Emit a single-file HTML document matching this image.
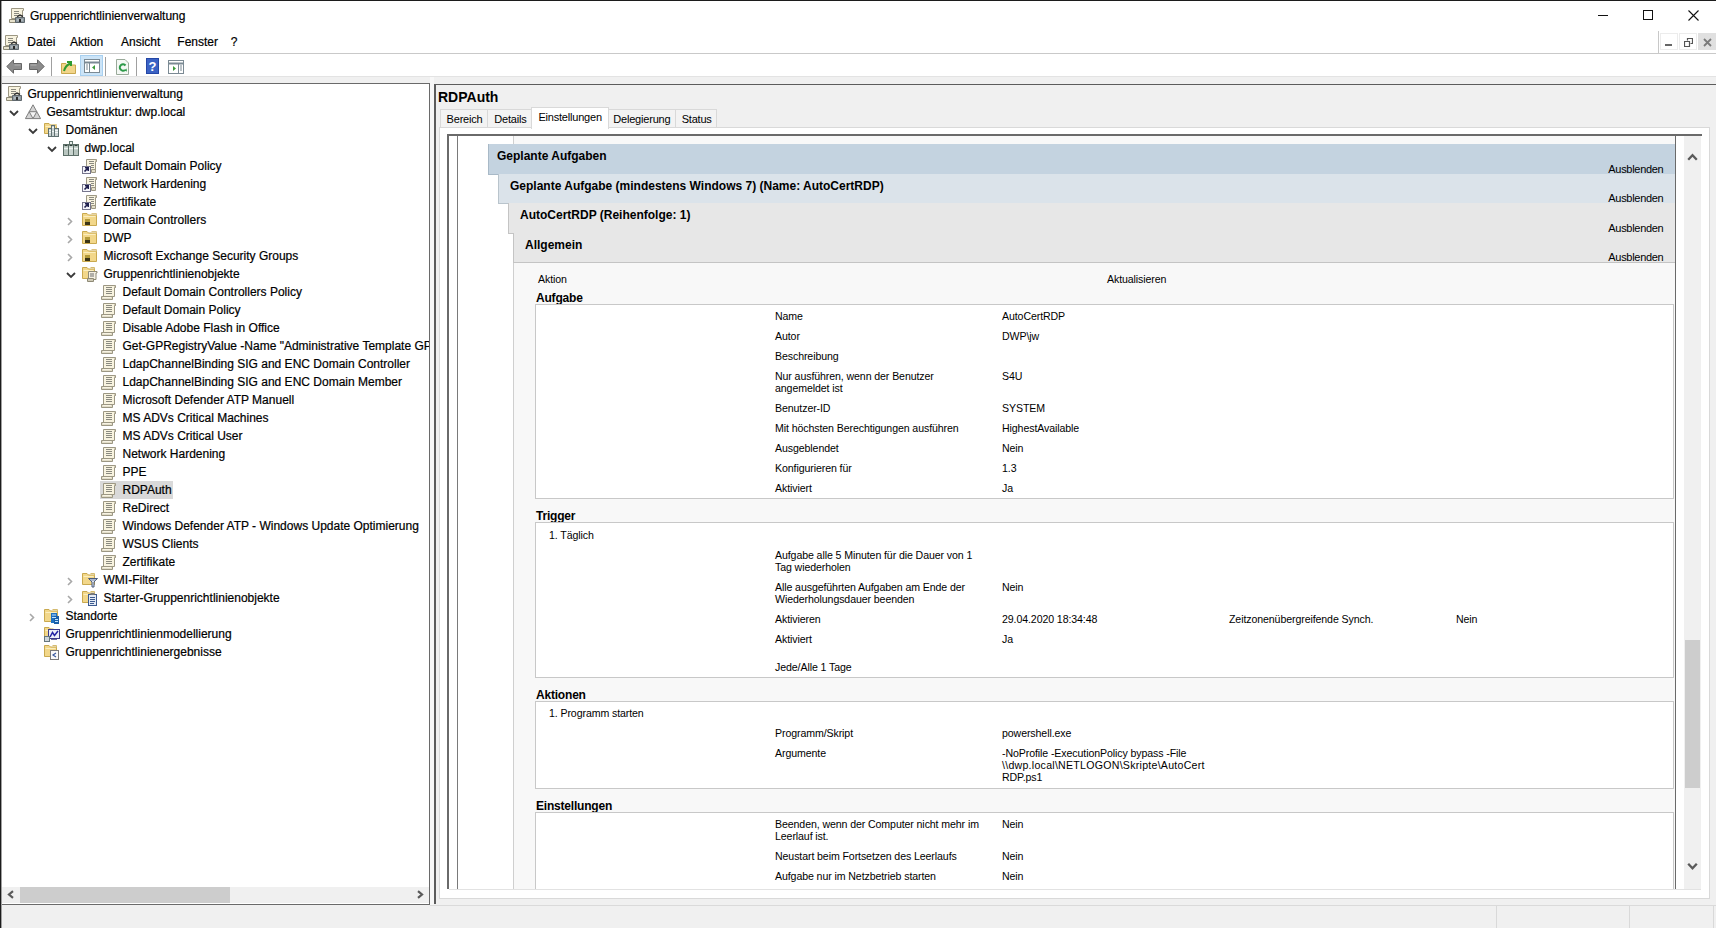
<!DOCTYPE html>
<html><head><meta charset="utf-8"><style>
html,body{margin:0;padding:0;width:1716px;height:928px;overflow:hidden;background:#fff}
body{position:relative;font-family:"Liberation Sans",sans-serif}
.a{position:absolute}
.t{position:absolute;white-space:pre}
.s{-webkit-text-stroke:0.2px currentColor}
svg{display:block}
</style></head><body>
<div class="a" style="left:0px;top:0px;width:1716px;height:1px;background:#1c1c1c"></div>
<div class="a" style="left:0px;top:0px;width:1px;height:928px;background:#1c1c1c"></div>
<div class="t s" style="left:30px;top:8.94px;font-size:12px;line-height:15px;color:#000;">Gruppenrichtlinienverwaltung</div>
<div class="a" style="left:1598px;top:15px;width:10px;height:1px;background:#111"></div>
<div class="a" style="left:1643px;top:10px;width:10px;height:10px;border:1px solid #111;box-sizing:border-box"></div>
<svg class="a" style="left:1688px;top:10px" width="11" height="11"><path d="M0.5 0.5L10.5 10.5M10.5 0.5L0.5 10.5" stroke="#111" stroke-width="1.1"/></svg>
<div class="t s" style="left:27.3px;top:35.24px;font-size:12px;line-height:15px;color:#000;">Datei</div>
<div class="t s" style="left:69.9px;top:35.24px;font-size:12px;line-height:15px;color:#000;">Aktion</div>
<div class="t s" style="left:121px;top:35.24px;font-size:12px;line-height:15px;color:#000;">Ansicht</div>
<div class="t s" style="left:177.3px;top:35.24px;font-size:12px;line-height:15px;color:#000;">Fenster</div>
<div class="t s" style="left:230.8px;top:35.24px;font-size:12px;line-height:15px;color:#000;">?</div>
<div class="a" style="left:1px;top:53px;width:1657px;height:1px;background:#c9c9c9"></div>
<div class="a" style="left:1658px;top:31px;width:1px;height:23px;background:#c8c8c8"></div>
<div class="a" style="left:1658px;top:53px;width:58px;height:1px;background:#c9c9c9"></div>
<div class="a" style="left:1665px;top:44px;width:7px;height:2px;background:#666"></div>
<svg class="a" style="left:1684px;top:38px" width="9" height="9"><path d="M3.5 2.5V0.5H8.5V5.5H6.5" fill="none" stroke="#555" stroke-width="1.2"/><path d="M0.5 3.5H5.5V8.5H0.5Z" fill="none" stroke="#555" stroke-width="1.2"/></svg>
<div class="a" style="left:1660px;top:33px;width:18px;height:17px;border:1px solid #ececec;box-sizing:border-box"></div>
<div class="a" style="left:1679px;top:33px;width:18px;height:17px;border:1px solid #ececec;box-sizing:border-box"></div>
<div class="a" style="left:1698px;top:33px;width:18px;height:17px;background:#e0e0e0"></div>
<svg class="a" style="left:1703px;top:38px" width="9" height="9"><path d="M1 1L8 8M8 1L1 8" stroke="#7a7a7a" stroke-width="1.8"/></svg>
<div class="a" style="left:1px;top:77px;width:1715px;height:6px;background:#f0f0f0"></div>
<div class="a" style="left:1px;top:76px;width:1715px;height:1px;background:#e3e3e3"></div>
<div class="a" style="left:1px;top:83px;width:429px;height:822px;background:#fff;border-top:1px solid #6a6a6a;border-right:1px solid #6a6a6a;border-bottom:1px solid #6a6a6a;box-sizing:border-box"></div>
<div class="a" style="left:430px;top:83px;width:1286px;height:822px;background:#f0f0f0"></div>
<div class="a" style="left:430px;top:77px;width:4px;height:828px;background:#f7f7f7"></div>
<div class="a" style="left:1px;top:905px;width:1715px;height:23px;background:#f0f0f0"></div>
<div class="a" style="left:1496px;top:906px;width:1px;height:22px;background:#d9d9d9"></div>
<div class="a" style="left:1629px;top:906px;width:1px;height:22px;background:#d9d9d9"></div>
<div class="a" style="left:1713px;top:906px;width:1px;height:22px;background:#d9d9d9"></div>
<svg class="a" style="left:9px;top:8px" width="16" height="16" viewBox="0 0 16 16"><path d="M2.5 0.5H14.5V2.5H13.5V10.5H2.5Z" fill="#f8f3df" stroke="#9c9783"/><path d="M5 3.5H10M5 5.5H10M5 7.5H8" stroke="#8a8a80"/><path d="M0.5 11.5H7.5V14.5H0.5Z" fill="#e6e1cc" stroke="#8e8a76"/><path d="M6.5 9.5H15.5V14.5H6.5Z" fill="#909aa0" stroke="#5e676c"/><path d="M8 8.5L11 7L14 8.5" fill="none" stroke="#333" stroke-width="1.5"/><path d="M8 12H14" stroke="#c8d0d4"/><rect x="10" y="11" width="2" height="3" fill="#2a2a2a"/></svg>
<svg class="a" style="left:3px;top:35px" width="16" height="16" viewBox="0 0 16 16"><path d="M2.5 0.5H14.5V2.5H13.5V10.5H2.5Z" fill="#f8f3df" stroke="#9c9783"/><path d="M5 3.5H10M5 5.5H10M5 7.5H8" stroke="#8a8a80"/><path d="M0.5 11.5H7.5V14.5H0.5Z" fill="#e6e1cc" stroke="#8e8a76"/><path d="M6.5 9.5H15.5V14.5H6.5Z" fill="#909aa0" stroke="#5e676c"/><path d="M8 8.5L11 7L14 8.5" fill="none" stroke="#333" stroke-width="1.5"/><path d="M8 12H14" stroke="#c8d0d4"/><rect x="10" y="11" width="2" height="3" fill="#2a2a2a"/></svg>
<svg class="a" style="left:6px;top:59px" width="16" height="16" viewBox="0 0 16 16"><path d="M0.8 7.5L7.5 0.8V4.5H15.5V10.5H7.5V14.2Z" fill="#8c8c8c" stroke="#666"/><path d="M8.5 6H14.5" stroke="#b4b4b4"/></svg>
<svg class="a" style="left:29px;top:59px" width="16" height="16" viewBox="0 0 16 16"><path d="M15.2 7.5L8.5 0.8V4.5H0.5V10.5H8.5V14.2Z" fill="#8c8c8c" stroke="#666"/><path d="M1.5 6H7.5" stroke="#b4b4b4"/></svg>
<div class="a" style="left:51px;top:57px;width:1px;height:19px;background:#a0a0a0"></div>
<svg class="a" style="left:61px;top:59px" width="16" height="16" viewBox="0 0 16 16"><path d="M0.5 4.5H5L6.5 6H14.5V14.5H0.5Z" fill="#f2d58a" stroke="#c9a84f"/><path d="M3 12C4 8 6 6 9 4.5M6 3H10V7" fill="none" stroke="#2f9a2f" stroke-width="2"/></svg>
<div class="a" style="left:80px;top:55px;width:23px;height:21px;background:#cce4f7;border:1px solid #a8d0f0;box-sizing:border-box"></div>
<svg class="a" style="left:84px;top:58px" width="16" height="16" viewBox="0 0 16 16"><rect x="0.5" y="1.5" width="15" height="13" fill="#fff" stroke="#7b8a94"/><path d="M1 4.5H15" stroke="#7b8a94" stroke-width="2"/><path d="M5.5 5V14" stroke="#7b8a94"/><path d="M2 7H4M2 9H4M2 11H4" stroke="#7b8a94"/><path d="M11 7V12L8 9.5Z" fill="#3b9a3b"/></svg>
<div class="a" style="left:105px;top:57px;width:1px;height:19px;background:#a0a0a0"></div>
<svg class="a" style="left:116px;top:59px" width="16" height="16" viewBox="0 0 16 16"><path d="M0.5 0.5H9L12.5 4V15.5H0.5Z" fill="#f4f8f4" stroke="#9aaa9a"/><path d="M9.5 6.5A3.2 3.2 0 1 0 9 11" fill="none" stroke="#2e9a4a" stroke-width="2"/><path d="M8 11.5L10.5 9.5L11 12.5Z" fill="#2e9a4a"/></svg>
<div class="a" style="left:136px;top:57px;width:1px;height:19px;background:#a0a0a0"></div>
<svg class="a" style="left:146px;top:58px" width="16" height="16" viewBox="0 0 16 16"><rect x="0" y="0" width="13" height="16" fill="#2447a6"/><rect x="1" y="1" width="11" height="14" fill="#3b62c4"/><text x="6.5" y="13" font-family="Liberation Sans" font-weight="bold" font-size="13" fill="#fff" text-anchor="middle">?</text></svg>
<svg class="a" style="left:168px;top:59px" width="16" height="16" viewBox="0 0 16 16"><rect x="0.5" y="1.5" width="15" height="13" fill="#fff" stroke="#7b8a94"/><path d="M1 4.5H15" stroke="#7b8a94" stroke-width="2"/><path d="M10.5 5V14" stroke="#7b8a94"/><path d="M12 7H14M12 9H14M12 11H14" stroke="#7b8a94"/><path d="M5 7V12L8 9.5Z" fill="#3b9a3b"/></svg>
<div class="a" style="left:1px;top:84px;width:428px;height:803px;overflow:hidden;">
<svg class="a" style="left:5px;top:2px" width="16" height="16" viewBox="0 0 16 16"><path d="M2.5 0.5H14.5V2.5H13.5V10.5H2.5Z" fill="#f8f3df" stroke="#9c9783"/><path d="M5 3.5H10M5 5.5H10M5 7.5H8" stroke="#8a8a80"/><path d="M0.5 11.5H7.5V14.5H0.5Z" fill="#e6e1cc" stroke="#8e8a76"/><path d="M6.5 9.5H15.5V14.5H6.5Z" fill="#909aa0" stroke="#5e676c"/><path d="M8 8.5L11 7L14 8.5" fill="none" stroke="#333" stroke-width="1.5"/><path d="M8 12H14" stroke="#c8d0d4"/><rect x="10" y="11" width="2" height="3" fill="#2a2a2a"/></svg>
<div class="t s" style="left:26.5px;top:2.94px;font-size:12px;line-height:15px;color:#000;">Gruppenrichtlinienverwaltung</div>
<svg class="a" style="left:8px;top:26px" width="10" height="7" viewBox="0 0 10 7"><path d="M1 1L5 5L9 1" fill="none" stroke="#3a3a3a" stroke-width="1.8"/></svg>
<svg class="a" style="left:24px;top:20px" width="16" height="16" viewBox="0 0 16 16"><path d="M8 0.8L15.6 14.6H0.4Z" fill="#d4d4d4" stroke="#7e7e7e"/><path d="M4.2 7.7H11.8L8 14.6Z" fill="#f4f4f4" stroke="#7e7e7e"/></svg>
<div class="t s" style="left:45.5px;top:20.94px;font-size:12px;line-height:15px;color:#000;">Gesamtstruktur: dwp.local</div>
<svg class="a" style="left:27px;top:44px" width="10" height="7" viewBox="0 0 10 7"><path d="M1 1L5 5L9 1" fill="none" stroke="#3a3a3a" stroke-width="1.8"/></svg>
<svg class="a" style="left:43px;top:38px" width="16" height="16" viewBox="0 0 16 16"><path d="M0.5 1.5H5L6.5 3H12.5V11.5H0.5Z" fill="#f2d78a" stroke="#c9a94f"/><path d="M1.5 4.5H11.5" stroke="#fbeebf"/><path d="M8.5 2.5H12.5V4.5" fill="none" stroke="#e4cf93"/><rect x="7.5" y="3.5" width="3" height="11" fill="#c9d2d2" stroke="#5f7070"/><rect x="4.5" y="6.5" width="3" height="8" fill="#c9d2d2" stroke="#5f7070"/><rect x="10.5" y="6.5" width="4" height="8" fill="#c9d2d2" stroke="#5f7070"/><path d="M5 8.5H7M8 5.5H10M11 8.5H14M5 10.5H7M8 9.5H10M11 10.5H14" stroke="#f2f6f6"/></svg>
<div class="t s" style="left:64.5px;top:38.94px;font-size:12px;line-height:15px;color:#000;">Domänen</div>
<svg class="a" style="left:46px;top:62px" width="10" height="7" viewBox="0 0 10 7"><path d="M1 1L5 5L9 1" fill="none" stroke="#3a3a3a" stroke-width="1.8"/></svg>
<svg class="a" style="left:62px;top:56px" width="16" height="16" viewBox="0 0 16 16"><rect x="6.5" y="1.5" width="3" height="3" fill="#e9eeec" stroke="#62776f"/><rect x="0.5" y="4.5" width="5" height="11" fill="#b9c6c0" stroke="#5c6f68"/><rect x="5.5" y="4.5" width="5" height="11" fill="#c9d4cf" stroke="#5c6f68"/><rect x="10.5" y="4.5" width="5" height="11" fill="#b9c6c0" stroke="#5c6f68"/><path d="M1.5 5.5H4.5M6.5 5.5H9.5M11.5 5.5H14.5" stroke="#2f3f3a"/><path d="M1 8.5H5M6 8.5H10M11 8.5H15" stroke="#eef3f1" stroke-width="1.4"/></svg>
<div class="t s" style="left:83.5px;top:56.94px;font-size:12px;line-height:15px;color:#000;">dwp.local</div>
<svg class="a" style="left:81px;top:74px" width="16" height="16" viewBox="0 0 16 16"><path d="M4.5 1.5H14.5V3.5H13.5V13.5H4.5Z" fill="#f8f3df" stroke="#9c9783"/><path d="M12.5 1.5C14 1.5 14.5 2 14.5 3.5" fill="#d0cbb6" stroke="#9c9783"/><path d="M7 3.5H12M7 5.5H12M9 7.5H12M9 9.5H12" stroke="#8a8a80"/><path d="M9.5 11.5H13.5V14.5H9.5Z" fill="#e2ddc8" stroke="#9c9783"/><rect x="0.5" y="8.5" width="8" height="7" fill="#f4f4fa" stroke="#76768c"/><path d="M2.5 13.5L6 10M3 9.8H6.2V13" stroke="#20204e" stroke-width="1.6" fill="none"/></svg>
<div class="t s" style="left:102.5px;top:74.94px;font-size:12px;line-height:15px;color:#000;">Default Domain Policy</div>
<svg class="a" style="left:81px;top:92px" width="16" height="16" viewBox="0 0 16 16"><path d="M4.5 1.5H14.5V3.5H13.5V13.5H4.5Z" fill="#f8f3df" stroke="#9c9783"/><path d="M12.5 1.5C14 1.5 14.5 2 14.5 3.5" fill="#d0cbb6" stroke="#9c9783"/><path d="M7 3.5H12M7 5.5H12M9 7.5H12M9 9.5H12" stroke="#8a8a80"/><path d="M9.5 11.5H13.5V14.5H9.5Z" fill="#e2ddc8" stroke="#9c9783"/><rect x="0.5" y="8.5" width="8" height="7" fill="#f4f4fa" stroke="#76768c"/><path d="M2.5 13.5L6 10M3 9.8H6.2V13" stroke="#20204e" stroke-width="1.6" fill="none"/></svg>
<div class="t s" style="left:102.5px;top:92.94px;font-size:12px;line-height:15px;color:#000;">Network Hardening</div>
<svg class="a" style="left:81px;top:110px" width="16" height="16" viewBox="0 0 16 16"><path d="M4.5 1.5H14.5V3.5H13.5V13.5H4.5Z" fill="#f8f3df" stroke="#9c9783"/><path d="M12.5 1.5C14 1.5 14.5 2 14.5 3.5" fill="#d0cbb6" stroke="#9c9783"/><path d="M7 3.5H12M7 5.5H12M9 7.5H12M9 9.5H12" stroke="#8a8a80"/><path d="M9.5 11.5H13.5V14.5H9.5Z" fill="#e2ddc8" stroke="#9c9783"/><rect x="0.5" y="8.5" width="8" height="7" fill="#f4f4fa" stroke="#76768c"/><path d="M2.5 13.5L6 10M3 9.8H6.2V13" stroke="#20204e" stroke-width="1.6" fill="none"/></svg>
<div class="t s" style="left:102.5px;top:110.94px;font-size:12px;line-height:15px;color:#000;">Zertifikate</div>
<svg class="a" style="left:66px;top:133px" width="7" height="9" viewBox="0 0 7 9"><path d="M1 1L4.5 4.5L1 8" fill="none" stroke="#a8a8a8" stroke-width="1.6"/></svg>
<svg class="a" style="left:81px;top:128px" width="16" height="16" viewBox="0 0 16 16"><path d="M0.5 1.5H5L6.5 3H14.5V13.5H0.5Z" fill="#f2d78a" stroke="#c9a94f"/><path d="M1.5 4.5H13.5" stroke="#fbeebf"/><path d="M9.5 1.5H14.5V3.5" fill="none" stroke="#dcc383"/><rect x="3" y="7" width="5" height="6" fill="#b39a3a"/><rect x="3" y="10" width="5" height="3" fill="#3a3416"/></svg>
<div class="t s" style="left:102.5px;top:128.94px;font-size:12px;line-height:15px;color:#000;">Domain Controllers</div>
<svg class="a" style="left:66px;top:151px" width="7" height="9" viewBox="0 0 7 9"><path d="M1 1L4.5 4.5L1 8" fill="none" stroke="#a8a8a8" stroke-width="1.6"/></svg>
<svg class="a" style="left:81px;top:146px" width="16" height="16" viewBox="0 0 16 16"><path d="M0.5 1.5H5L6.5 3H14.5V13.5H0.5Z" fill="#f2d78a" stroke="#c9a94f"/><path d="M1.5 4.5H13.5" stroke="#fbeebf"/><path d="M9.5 1.5H14.5V3.5" fill="none" stroke="#dcc383"/><rect x="3" y="7" width="5" height="6" fill="#b39a3a"/><rect x="3" y="10" width="5" height="3" fill="#3a3416"/></svg>
<div class="t s" style="left:102.5px;top:146.94px;font-size:12px;line-height:15px;color:#000;">DWP</div>
<svg class="a" style="left:66px;top:169px" width="7" height="9" viewBox="0 0 7 9"><path d="M1 1L4.5 4.5L1 8" fill="none" stroke="#a8a8a8" stroke-width="1.6"/></svg>
<svg class="a" style="left:81px;top:164px" width="16" height="16" viewBox="0 0 16 16"><path d="M0.5 1.5H5L6.5 3H14.5V13.5H0.5Z" fill="#f2d78a" stroke="#c9a94f"/><path d="M1.5 4.5H13.5" stroke="#fbeebf"/><path d="M9.5 1.5H14.5V3.5" fill="none" stroke="#dcc383"/><rect x="3" y="7" width="5" height="6" fill="#b39a3a"/><rect x="3" y="10" width="5" height="3" fill="#3a3416"/></svg>
<div class="t s" style="left:102.5px;top:164.94px;font-size:12px;line-height:15px;color:#000;">Microsoft Exchange Security Groups</div>
<svg class="a" style="left:65px;top:188px" width="10" height="7" viewBox="0 0 10 7"><path d="M1 1L5 5L9 1" fill="none" stroke="#3a3a3a" stroke-width="1.8"/></svg>
<svg class="a" style="left:81px;top:182px" width="16" height="16" viewBox="0 0 16 16"><path d="M0.5 1.5H5L6.5 3H12.5V12.5H0.5Z" fill="#f2d78a" stroke="#c9a94f"/><path d="M1.5 4.5H11.5" stroke="#fbeebf"/><path d="M8.5 1.5H12.5V3.5" fill="none" stroke="#d5bb6f"/><path d="M6.5 5.5H15V7H14V13.5H6.5Z" fill="#f4f0e2" stroke="#8e8a76"/><path d="M8 8H12M8 10H12" stroke="#6e6e6e"/><path d="M5.5 12.5H11.5V15.5H5.5Z" fill="#cfcab6" stroke="#8e8a76"/></svg>
<div class="t s" style="left:102.5px;top:182.94px;font-size:12px;line-height:15px;color:#000;">Gruppenrichtlinienobjekte</div>
<svg class="a" style="left:100px;top:200px" width="16" height="16" viewBox="0 0 16 16"><path d="M2.5 1.5H14.5V3.5H13.5V12.5H2.5Z" fill="#f8f3df" stroke="#9c9783"/><path d="M12.5 1.5C14 1.5 14.5 2 14.5 3.5" fill="#d0cbb6" stroke="#9c9783"/><path d="M5 3.5H11" stroke="#8a8a80"/><path d="M5 5.5H11" stroke="#8a8a80"/><path d="M5 7.5H11" stroke="#8a8a80"/><path d="M5 9.5H11" stroke="#8a8a80"/><path d="M0.5 12.5H11.5V15.5H0.5Z" fill="#e2ddc8" stroke="#9c9783"/><path d="M2 13.5H10" stroke="#f7f3e4"/></svg>
<div class="t s" style="left:121.5px;top:200.94px;font-size:12px;line-height:15px;color:#000;">Default Domain Controllers Policy</div>
<svg class="a" style="left:100px;top:218px" width="16" height="16" viewBox="0 0 16 16"><path d="M2.5 1.5H14.5V3.5H13.5V12.5H2.5Z" fill="#f8f3df" stroke="#9c9783"/><path d="M12.5 1.5C14 1.5 14.5 2 14.5 3.5" fill="#d0cbb6" stroke="#9c9783"/><path d="M5 3.5H11" stroke="#8a8a80"/><path d="M5 5.5H11" stroke="#8a8a80"/><path d="M5 7.5H11" stroke="#8a8a80"/><path d="M5 9.5H11" stroke="#8a8a80"/><path d="M0.5 12.5H11.5V15.5H0.5Z" fill="#e2ddc8" stroke="#9c9783"/><path d="M2 13.5H10" stroke="#f7f3e4"/></svg>
<div class="t s" style="left:121.5px;top:218.94px;font-size:12px;line-height:15px;color:#000;">Default Domain Policy</div>
<svg class="a" style="left:100px;top:236px" width="16" height="16" viewBox="0 0 16 16"><path d="M2.5 1.5H14.5V3.5H13.5V12.5H2.5Z" fill="#f8f3df" stroke="#9c9783"/><path d="M12.5 1.5C14 1.5 14.5 2 14.5 3.5" fill="#d0cbb6" stroke="#9c9783"/><path d="M5 3.5H11" stroke="#8a8a80"/><path d="M5 5.5H11" stroke="#8a8a80"/><path d="M5 7.5H11" stroke="#8a8a80"/><path d="M5 9.5H11" stroke="#8a8a80"/><path d="M0.5 12.5H11.5V15.5H0.5Z" fill="#e2ddc8" stroke="#9c9783"/><path d="M2 13.5H10" stroke="#f7f3e4"/></svg>
<div class="t s" style="left:121.5px;top:236.94px;font-size:12px;line-height:15px;color:#000;">Disable Adobe Flash in Office</div>
<svg class="a" style="left:100px;top:254px" width="16" height="16" viewBox="0 0 16 16"><path d="M2.5 1.5H14.5V3.5H13.5V12.5H2.5Z" fill="#f8f3df" stroke="#9c9783"/><path d="M12.5 1.5C14 1.5 14.5 2 14.5 3.5" fill="#d0cbb6" stroke="#9c9783"/><path d="M5 3.5H11" stroke="#8a8a80"/><path d="M5 5.5H11" stroke="#8a8a80"/><path d="M5 7.5H11" stroke="#8a8a80"/><path d="M5 9.5H11" stroke="#8a8a80"/><path d="M0.5 12.5H11.5V15.5H0.5Z" fill="#e2ddc8" stroke="#9c9783"/><path d="M2 13.5H10" stroke="#f7f3e4"/></svg>
<div class="t s" style="left:121.5px;top:254.94px;font-size:12px;line-height:15px;color:#000;">Get-GPRegistryValue -Name &quot;Administrative Template GPO&quot;</div>
<svg class="a" style="left:100px;top:272px" width="16" height="16" viewBox="0 0 16 16"><path d="M2.5 1.5H14.5V3.5H13.5V12.5H2.5Z" fill="#f8f3df" stroke="#9c9783"/><path d="M12.5 1.5C14 1.5 14.5 2 14.5 3.5" fill="#d0cbb6" stroke="#9c9783"/><path d="M5 3.5H11" stroke="#8a8a80"/><path d="M5 5.5H11" stroke="#8a8a80"/><path d="M5 7.5H11" stroke="#8a8a80"/><path d="M5 9.5H11" stroke="#8a8a80"/><path d="M0.5 12.5H11.5V15.5H0.5Z" fill="#e2ddc8" stroke="#9c9783"/><path d="M2 13.5H10" stroke="#f7f3e4"/></svg>
<div class="t s" style="left:121.5px;top:272.94px;font-size:12px;line-height:15px;color:#000;">LdapChannelBinding SIG and ENC Domain Controller</div>
<svg class="a" style="left:100px;top:290px" width="16" height="16" viewBox="0 0 16 16"><path d="M2.5 1.5H14.5V3.5H13.5V12.5H2.5Z" fill="#f8f3df" stroke="#9c9783"/><path d="M12.5 1.5C14 1.5 14.5 2 14.5 3.5" fill="#d0cbb6" stroke="#9c9783"/><path d="M5 3.5H11" stroke="#8a8a80"/><path d="M5 5.5H11" stroke="#8a8a80"/><path d="M5 7.5H11" stroke="#8a8a80"/><path d="M5 9.5H11" stroke="#8a8a80"/><path d="M0.5 12.5H11.5V15.5H0.5Z" fill="#e2ddc8" stroke="#9c9783"/><path d="M2 13.5H10" stroke="#f7f3e4"/></svg>
<div class="t s" style="left:121.5px;top:290.94px;font-size:12px;line-height:15px;color:#000;">LdapChannelBinding SIG and ENC Domain Member</div>
<svg class="a" style="left:100px;top:308px" width="16" height="16" viewBox="0 0 16 16"><path d="M2.5 1.5H14.5V3.5H13.5V12.5H2.5Z" fill="#f8f3df" stroke="#9c9783"/><path d="M12.5 1.5C14 1.5 14.5 2 14.5 3.5" fill="#d0cbb6" stroke="#9c9783"/><path d="M5 3.5H11" stroke="#8a8a80"/><path d="M5 5.5H11" stroke="#8a8a80"/><path d="M5 7.5H11" stroke="#8a8a80"/><path d="M5 9.5H11" stroke="#8a8a80"/><path d="M0.5 12.5H11.5V15.5H0.5Z" fill="#e2ddc8" stroke="#9c9783"/><path d="M2 13.5H10" stroke="#f7f3e4"/></svg>
<div class="t s" style="left:121.5px;top:308.94px;font-size:12px;line-height:15px;color:#000;">Microsoft Defender ATP Manuell</div>
<svg class="a" style="left:100px;top:326px" width="16" height="16" viewBox="0 0 16 16"><path d="M2.5 1.5H14.5V3.5H13.5V12.5H2.5Z" fill="#f8f3df" stroke="#9c9783"/><path d="M12.5 1.5C14 1.5 14.5 2 14.5 3.5" fill="#d0cbb6" stroke="#9c9783"/><path d="M5 3.5H11" stroke="#8a8a80"/><path d="M5 5.5H11" stroke="#8a8a80"/><path d="M5 7.5H11" stroke="#8a8a80"/><path d="M5 9.5H11" stroke="#8a8a80"/><path d="M0.5 12.5H11.5V15.5H0.5Z" fill="#e2ddc8" stroke="#9c9783"/><path d="M2 13.5H10" stroke="#f7f3e4"/></svg>
<div class="t s" style="left:121.5px;top:326.94px;font-size:12px;line-height:15px;color:#000;">MS ADVs Critical Machines</div>
<svg class="a" style="left:100px;top:344px" width="16" height="16" viewBox="0 0 16 16"><path d="M2.5 1.5H14.5V3.5H13.5V12.5H2.5Z" fill="#f8f3df" stroke="#9c9783"/><path d="M12.5 1.5C14 1.5 14.5 2 14.5 3.5" fill="#d0cbb6" stroke="#9c9783"/><path d="M5 3.5H11" stroke="#8a8a80"/><path d="M5 5.5H11" stroke="#8a8a80"/><path d="M5 7.5H11" stroke="#8a8a80"/><path d="M5 9.5H11" stroke="#8a8a80"/><path d="M0.5 12.5H11.5V15.5H0.5Z" fill="#e2ddc8" stroke="#9c9783"/><path d="M2 13.5H10" stroke="#f7f3e4"/></svg>
<div class="t s" style="left:121.5px;top:344.94px;font-size:12px;line-height:15px;color:#000;">MS ADVs Critical User</div>
<svg class="a" style="left:100px;top:362px" width="16" height="16" viewBox="0 0 16 16"><path d="M2.5 1.5H14.5V3.5H13.5V12.5H2.5Z" fill="#f8f3df" stroke="#9c9783"/><path d="M12.5 1.5C14 1.5 14.5 2 14.5 3.5" fill="#d0cbb6" stroke="#9c9783"/><path d="M5 3.5H11" stroke="#8a8a80"/><path d="M5 5.5H11" stroke="#8a8a80"/><path d="M5 7.5H11" stroke="#8a8a80"/><path d="M5 9.5H11" stroke="#8a8a80"/><path d="M0.5 12.5H11.5V15.5H0.5Z" fill="#e2ddc8" stroke="#9c9783"/><path d="M2 13.5H10" stroke="#f7f3e4"/></svg>
<div class="t s" style="left:121.5px;top:362.94px;font-size:12px;line-height:15px;color:#000;">Network Hardening</div>
<svg class="a" style="left:100px;top:380px" width="16" height="16" viewBox="0 0 16 16"><path d="M2.5 1.5H14.5V3.5H13.5V12.5H2.5Z" fill="#f8f3df" stroke="#9c9783"/><path d="M12.5 1.5C14 1.5 14.5 2 14.5 3.5" fill="#d0cbb6" stroke="#9c9783"/><path d="M5 3.5H11" stroke="#8a8a80"/><path d="M5 5.5H11" stroke="#8a8a80"/><path d="M5 7.5H11" stroke="#8a8a80"/><path d="M5 9.5H11" stroke="#8a8a80"/><path d="M0.5 12.5H11.5V15.5H0.5Z" fill="#e2ddc8" stroke="#9c9783"/><path d="M2 13.5H10" stroke="#f7f3e4"/></svg>
<div class="t s" style="left:121.5px;top:380.94px;font-size:12px;line-height:15px;color:#000;">PPE</div>
<div class="a" style="left:99px;top:397px;width:73px;height:18px;background:#d9d9d9"></div>
<svg class="a" style="left:100px;top:398px" width="16" height="16" viewBox="0 0 16 16"><path d="M2.5 1.5H14.5V3.5H13.5V12.5H2.5Z" fill="#f8f3df" stroke="#9c9783"/><path d="M12.5 1.5C14 1.5 14.5 2 14.5 3.5" fill="#d0cbb6" stroke="#9c9783"/><path d="M5 3.5H11" stroke="#8a8a80"/><path d="M5 5.5H11" stroke="#8a8a80"/><path d="M5 7.5H11" stroke="#8a8a80"/><path d="M5 9.5H11" stroke="#8a8a80"/><path d="M0.5 12.5H11.5V15.5H0.5Z" fill="#e2ddc8" stroke="#9c9783"/><path d="M2 13.5H10" stroke="#f7f3e4"/></svg>
<div class="t s" style="left:121.5px;top:398.94px;font-size:12px;line-height:15px;color:#000;">RDPAuth</div>
<svg class="a" style="left:100px;top:416px" width="16" height="16" viewBox="0 0 16 16"><path d="M2.5 1.5H14.5V3.5H13.5V12.5H2.5Z" fill="#f8f3df" stroke="#9c9783"/><path d="M12.5 1.5C14 1.5 14.5 2 14.5 3.5" fill="#d0cbb6" stroke="#9c9783"/><path d="M5 3.5H11" stroke="#8a8a80"/><path d="M5 5.5H11" stroke="#8a8a80"/><path d="M5 7.5H11" stroke="#8a8a80"/><path d="M5 9.5H11" stroke="#8a8a80"/><path d="M0.5 12.5H11.5V15.5H0.5Z" fill="#e2ddc8" stroke="#9c9783"/><path d="M2 13.5H10" stroke="#f7f3e4"/></svg>
<div class="t s" style="left:121.5px;top:416.94px;font-size:12px;line-height:15px;color:#000;">ReDirect</div>
<svg class="a" style="left:100px;top:434px" width="16" height="16" viewBox="0 0 16 16"><path d="M2.5 1.5H14.5V3.5H13.5V12.5H2.5Z" fill="#f8f3df" stroke="#9c9783"/><path d="M12.5 1.5C14 1.5 14.5 2 14.5 3.5" fill="#d0cbb6" stroke="#9c9783"/><path d="M5 3.5H11" stroke="#8a8a80"/><path d="M5 5.5H11" stroke="#8a8a80"/><path d="M5 7.5H11" stroke="#8a8a80"/><path d="M5 9.5H11" stroke="#8a8a80"/><path d="M0.5 12.5H11.5V15.5H0.5Z" fill="#e2ddc8" stroke="#9c9783"/><path d="M2 13.5H10" stroke="#f7f3e4"/></svg>
<div class="t s" style="left:121.5px;top:434.94px;font-size:12px;line-height:15px;color:#000;">Windows Defender ATP - Windows Update Optimierung</div>
<svg class="a" style="left:100px;top:452px" width="16" height="16" viewBox="0 0 16 16"><path d="M2.5 1.5H14.5V3.5H13.5V12.5H2.5Z" fill="#f8f3df" stroke="#9c9783"/><path d="M12.5 1.5C14 1.5 14.5 2 14.5 3.5" fill="#d0cbb6" stroke="#9c9783"/><path d="M5 3.5H11" stroke="#8a8a80"/><path d="M5 5.5H11" stroke="#8a8a80"/><path d="M5 7.5H11" stroke="#8a8a80"/><path d="M5 9.5H11" stroke="#8a8a80"/><path d="M0.5 12.5H11.5V15.5H0.5Z" fill="#e2ddc8" stroke="#9c9783"/><path d="M2 13.5H10" stroke="#f7f3e4"/></svg>
<div class="t s" style="left:121.5px;top:452.94px;font-size:12px;line-height:15px;color:#000;">WSUS Clients</div>
<svg class="a" style="left:100px;top:470px" width="16" height="16" viewBox="0 0 16 16"><path d="M2.5 1.5H14.5V3.5H13.5V12.5H2.5Z" fill="#f8f3df" stroke="#9c9783"/><path d="M12.5 1.5C14 1.5 14.5 2 14.5 3.5" fill="#d0cbb6" stroke="#9c9783"/><path d="M5 3.5H11" stroke="#8a8a80"/><path d="M5 5.5H11" stroke="#8a8a80"/><path d="M5 7.5H11" stroke="#8a8a80"/><path d="M5 9.5H11" stroke="#8a8a80"/><path d="M0.5 12.5H11.5V15.5H0.5Z" fill="#e2ddc8" stroke="#9c9783"/><path d="M2 13.5H10" stroke="#f7f3e4"/></svg>
<div class="t s" style="left:121.5px;top:470.94px;font-size:12px;line-height:15px;color:#000;">Zertifikate</div>
<svg class="a" style="left:66px;top:493px" width="7" height="9" viewBox="0 0 7 9"><path d="M1 1L4.5 4.5L1 8" fill="none" stroke="#a8a8a8" stroke-width="1.6"/></svg>
<svg class="a" style="left:81px;top:488px" width="16" height="16" viewBox="0 0 16 16"><path d="M0.5 1.5H5L6.5 3H12.5V12.5H0.5Z" fill="#f2d78a" stroke="#c9a94f"/><path d="M1.5 4.5H11.5" stroke="#fbeebf"/><path d="M8.5 1.5H12.5V3.5" fill="none" stroke="#d5bb6f"/><path d="M6.5 6.5H15.5L12 10V15H10V10Z" fill="#dfe5ef" stroke="#4b5b7b"/><path d="M8 8H14" stroke="#7585a6"/></svg>
<div class="t s" style="left:102.5px;top:488.94px;font-size:12px;line-height:15px;color:#000;">WMI-Filter</div>
<svg class="a" style="left:66px;top:511px" width="7" height="9" viewBox="0 0 7 9"><path d="M1 1L4.5 4.5L1 8" fill="none" stroke="#a8a8a8" stroke-width="1.6"/></svg>
<svg class="a" style="left:81px;top:506px" width="16" height="16" viewBox="0 0 16 16"><path d="M0.5 1.5H5L6.5 3H12.5V12.5H0.5Z" fill="#f2d78a" stroke="#c9a94f"/><path d="M1.5 4.5H11.5" stroke="#fbeebf"/><path d="M8.5 1.5H12.5V3.5" fill="none" stroke="#d5bb6f"/><rect x="6.5" y="4.5" width="8" height="11" fill="#e3eaf5" stroke="#3c5a8e"/><path d="M8 7.5H13M8 9.5H13M8 11.5H13M8 13.5H12" stroke="#3c5a8e"/><rect x="8.5" y="3" width="4" height="2" fill="#7a7a7a"/></svg>
<div class="t s" style="left:102.5px;top:506.94px;font-size:12px;line-height:15px;color:#000;">Starter-Gruppenrichtlinienobjekte</div>
<svg class="a" style="left:28px;top:529px" width="7" height="9" viewBox="0 0 7 9"><path d="M1 1L4.5 4.5L1 8" fill="none" stroke="#a8a8a8" stroke-width="1.6"/></svg>
<svg class="a" style="left:43px;top:524px" width="16" height="16" viewBox="0 0 16 16"><path d="M0.5 1.5H5L6.5 3H13.5V13.5H0.5Z" fill="#f2d78a" stroke="#c9a94f"/><path d="M1.5 4.5H12.5" stroke="#fbeebf"/><path d="M8.5 1.5H13.5V3.5" fill="none" stroke="#d5bb6f"/><rect x="7" y="5" width="6" height="10" fill="#1d70c2"/><rect x="10" y="8" width="5" height="8" fill="#1a5fa8"/><path d="M8 7H12M8 9.5H12M11 11.5H14M11 13.5H14" stroke="#bfe2ff"/></svg>
<div class="t s" style="left:64.5px;top:524.94px;font-size:12px;line-height:15px;color:#000;">Standorte</div>
<svg class="a" style="left:43px;top:542px" width="16" height="16" viewBox="0 0 16 16"><path d="M0.5 1.5H5L6.5 3H9.5V11.5H0.5Z" fill="#f2d78a" stroke="#c9a94f"/><path d="M1.5 4.5H8.5" stroke="#fbeebf"/><rect x="4.5" y="3.5" width="11" height="9" fill="#eceff8" stroke="#3a3a8a"/><path d="M6 11L8.5 6.5L10.5 9.5L14 5" stroke="#2424a4" stroke-width="1.5" fill="none"/><rect x="0.5" y="10.5" width="5" height="5" fill="#cdd6da" stroke="#66767c"/><path d="M7 13.5H13" stroke="#6a6a9a"/></svg>
<div class="t s" style="left:64.5px;top:542.94px;font-size:12px;line-height:15px;color:#000;">Gruppenrichtlinienmodellierung</div>
<svg class="a" style="left:43px;top:560px" width="16" height="16" viewBox="0 0 16 16"><path d="M0.5 1.5H5L6.5 3H12.5V12.5H0.5Z" fill="#f2d78a" stroke="#c9a94f"/><path d="M1.5 4.5H11.5" stroke="#fbeebf"/><path d="M8.5 1.5H12.5V3.5" fill="none" stroke="#d5bb6f"/><rect x="6.5" y="6.5" width="8" height="9" fill="#fafafa" stroke="#7a7a7a"/><path d="M12 9L9 11L12 13" stroke="#3a5aa0" fill="none" stroke-width="1.2"/></svg>
<div class="t s" style="left:64.5px;top:560.94px;font-size:12px;line-height:15px;color:#000;">Gruppenrichtlinienergebnisse</div>
</div>
<div class="a" style="left:2px;top:887px;width:427px;height:16px;background:#f0f0f0"></div>
<div class="a" style="left:20px;top:887px;width:210px;height:16px;background:#cdcdcd"></div>
<svg class="a" style="left:7px;top:890px" width="8" height="9" viewBox="0 0 8 9"><path d="M6 1.2L2 4.5L6 7.8" fill="none" stroke="#5a5a5a" stroke-width="2.2"/></svg>
<svg class="a" style="left:416px;top:890px" width="8" height="9" viewBox="0 0 8 9"><path d="M2 1.2L6 4.5L2 7.8" fill="none" stroke="#5a5a5a" stroke-width="2.2"/></svg>
<div class="a" style="left:434px;top:84px;width:1282px;height:1px;background:#5c5c5c"></div>
<div class="a" style="left:434px;top:84px;width:2px;height:820px;background:#5c5c5c"></div>
<div class="a" style="left:430px;top:905px;width:1286px;height:1px;background:#dadada"></div>
<div class="t" style="left:438px;top:88.15px;font-size:14px;line-height:18px;font-weight:bold;color:#000;">RDPAuth</div>
<div class="a" style="left:440px;top:109px;width:48px;height:19px;background:#f3f3f3;border:1px solid #d9d9d9;border-bottom:none;box-sizing:border-box"></div>
<div class="t" style="left:446.6px;top:112.19px;font-size:11px;line-height:14px;color:#000;letter-spacing:-0.2px">Bereich</div>
<div class="a" style="left:487px;top:109px;width:45px;height:19px;background:#f3f3f3;border:1px solid #d9d9d9;border-bottom:none;box-sizing:border-box"></div>
<div class="t" style="left:494.3px;top:112.19px;font-size:11px;line-height:14px;color:#000;letter-spacing:-0.2px">Details</div>
<div class="a" style="left:608px;top:109px;width:68px;height:19px;background:#f3f3f3;border:1px solid #d9d9d9;border-bottom:none;box-sizing:border-box"></div>
<div class="t" style="left:613.3px;top:112.19px;font-size:11px;line-height:14px;color:#000;letter-spacing:-0.2px">Delegierung</div>
<div class="a" style="left:675px;top:109px;width:42px;height:19px;background:#f3f3f3;border:1px solid #d9d9d9;border-bottom:none;box-sizing:border-box"></div>
<div class="t" style="left:681.7px;top:112.19px;font-size:11px;line-height:14px;color:#000;letter-spacing:-0.2px">Status</div>
<div class="a" style="left:439px;top:127px;width:1271px;height:772px;background:#fff;border:1px solid #d9d9d9;box-sizing:border-box"></div>
<div class="a" style="left:531px;top:107px;width:78px;height:22px;background:#fff;border:1px solid #d9d9d9;border-bottom:none;box-sizing:border-box"></div>
<div class="t" style="left:538.4px;top:110.19px;font-size:11px;line-height:14px;color:#000;letter-spacing:-0.2px">Einstellungen</div>
<div class="a" style="left:447px;top:134px;width:1255px;height:2px;background:#6a6a6a"></div>
<div class="a" style="left:447px;top:134px;width:2px;height:755px;background:#6a6a6a"></div>
<div class="a" style="left:449px;top:136px;width:1226px;height:753px;background:#fff"></div>
<div class="a" style="left:1675px;top:136px;width:1px;height:753px;background:#6a6a6a"></div>
<div class="a" style="left:449px;top:889px;width:1252px;height:1px;background:#e2e2e2"></div>
<div class="a" style="left:1684px;top:136px;width:17px;height:753px;background:#f0f0f0"></div>
<div class="a" style="left:1685px;top:640px;width:15px;height:148px;background:#cdcdcd"></div>
<svg class="a" style="left:1687px;top:152px" width="11" height="10" viewBox="0 0 11 10"><path d="M1.2 7.8L5.5 3.2L9.8 7.8" fill="none" stroke="#5a5a5a" stroke-width="2.3"/></svg>
<svg class="a" style="left:1687px;top:862px" width="11" height="10" viewBox="0 0 11 10"><path d="M1.2 1.8L5.5 6.4L9.8 1.8" fill="none" stroke="#5a5a5a" stroke-width="2.3"/></svg>
<div class="a" style="left:449px;top:136px;width:1226px;height:753px;overflow:hidden;">
<div class="a" style="left:8px;top:0px;width:1px;height:753px;background:#7a7a7a"></div>
<div class="a" style="left:65px;top:0px;width:1161px;height:8px;background:#f8f8f8"></div>
<div class="a" style="left:64px;top:0px;width:1px;height:10px;background:#d0d0d0"></div>
<div class="a" style="left:39px;top:8px;width:1187px;height:31px;background:#c4d3e0;border-left:1px solid #a8b9c7;border-bottom:1px solid #a8b9c7;box-sizing:border-box"></div>
<div class="t" style="left:48px;top:12.84px;font-size:12px;line-height:15px;font-weight:bold;color:#000;">Geplante Aufgaben</div>
<div class="t" style="left:1159.3px;top:25.69px;font-size:11px;line-height:14px;color:#000;letter-spacing:-0.3px">Ausblenden</div>
<div class="a" style="left:49px;top:38px;width:1177px;height:30px;background:#dbe3ea;border-left:1px solid #b9c4cc;border-bottom:1px solid #b9c4cc;box-sizing:border-box"></div>
<div class="t" style="left:61px;top:42.84px;font-size:12px;line-height:15px;font-weight:bold;color:#000;">Geplante Aufgabe (mindestens Windows 7) (Name: AutoCertRDP)</div>
<div class="t" style="left:1159.3px;top:55.19px;font-size:11px;line-height:14px;color:#000;letter-spacing:-0.3px">Ausblenden</div>
<div class="a" style="left:59px;top:67px;width:1167px;height:31px;background:#e7e7e7;border-left:1px solid #c4c4c4;border-bottom:1px solid #c4c4c4;box-sizing:border-box"></div>
<div class="t" style="left:71px;top:71.84px;font-size:12px;line-height:15px;font-weight:bold;color:#000;">AutoCertRDP (Reihenfolge: 1)</div>
<div class="t" style="left:1159.3px;top:84.69px;font-size:11px;line-height:14px;color:#000;letter-spacing:-0.3px">Ausblenden</div>
<div class="a" style="left:64px;top:97px;width:1162px;height:30px;background:#e7e7e7;border-left:1px solid #c4c4c4;border-bottom:1px solid #c4c4c4;box-sizing:border-box"></div>
<div class="t" style="left:76px;top:101.84px;font-size:12px;line-height:15px;font-weight:bold;color:#000;">Allgemein</div>
<div class="t" style="left:1159.3px;top:114.19px;font-size:11px;line-height:14px;color:#000;letter-spacing:-0.3px">Ausblenden</div>
<div class="a" style="left:64px;top:127px;width:1162px;height:700px;background:#f8f8f8;border-left:1px solid #cfcfcf;box-sizing:border-box"></div>
<div class="t" style="left:89px;top:137.33px;font-size:10.6px;line-height:13px;color:#000;letter-spacing:-0.1px">Aktion</div>
<div class="t" style="left:658px;top:137.33px;font-size:10.6px;line-height:13px;color:#000;letter-spacing:-0.1px">Aktualisieren</div>
<div class="t" style="left:87px;top:154.84px;font-size:12px;line-height:15px;font-weight:bold;color:#000;letter-spacing:-0.2px">Aufgabe</div>
<div class="a" style="left:86px;top:168px;width:1139px;height:195px;background:#fff;border:1px solid #c8c8c8;box-sizing:border-box"></div>
<div class="t" style="left:326px;top:173.83px;font-size:10.6px;line-height:13px;color:#000;letter-spacing:-0.1px">Name</div>
<div class="t" style="left:553px;top:173.83px;font-size:10.6px;line-height:13px;color:#000;letter-spacing:-0.1px">AutoCertRDP</div>
<div class="t" style="left:326px;top:193.83px;font-size:10.6px;line-height:13px;color:#000;letter-spacing:-0.1px">Autor</div>
<div class="t" style="left:553px;top:193.83px;font-size:10.6px;line-height:13px;color:#000;letter-spacing:-0.1px">DWP\jw</div>
<div class="t" style="left:326px;top:213.83px;font-size:10.6px;line-height:13px;color:#000;letter-spacing:-0.1px">Beschreibung</div>
<div class="t" style="left:326px;top:233.83px;font-size:10.6px;line-height:13px;color:#000;letter-spacing:-0.1px">Nur ausführen, wenn der Benutzer</div>
<div class="t" style="left:326px;top:245.83px;font-size:10.6px;line-height:13px;color:#000;letter-spacing:-0.1px">angemeldet ist</div>
<div class="t" style="left:553px;top:233.83px;font-size:10.6px;line-height:13px;color:#000;letter-spacing:-0.1px">S4U</div>
<div class="t" style="left:326px;top:265.83px;font-size:10.6px;line-height:13px;color:#000;letter-spacing:-0.1px">Benutzer-ID</div>
<div class="t" style="left:553px;top:265.83px;font-size:10.6px;line-height:13px;color:#000;letter-spacing:-0.1px">SYSTEM</div>
<div class="t" style="left:326px;top:285.83px;font-size:10.6px;line-height:13px;color:#000;letter-spacing:-0.1px">Mit höchsten Berechtigungen ausführen</div>
<div class="t" style="left:553px;top:285.83px;font-size:10.6px;line-height:13px;color:#000;letter-spacing:-0.1px">HighestAvailable</div>
<div class="t" style="left:326px;top:305.83px;font-size:10.6px;line-height:13px;color:#000;letter-spacing:-0.1px">Ausgeblendet</div>
<div class="t" style="left:553px;top:305.83px;font-size:10.6px;line-height:13px;color:#000;letter-spacing:-0.1px">Nein</div>
<div class="t" style="left:326px;top:325.83px;font-size:10.6px;line-height:13px;color:#000;letter-spacing:-0.1px">Konfigurieren für</div>
<div class="t" style="left:553px;top:325.83px;font-size:10.6px;line-height:13px;color:#000;letter-spacing:-0.1px">1.3</div>
<div class="t" style="left:326px;top:345.83px;font-size:10.6px;line-height:13px;color:#000;letter-spacing:-0.1px">Aktiviert</div>
<div class="t" style="left:553px;top:345.83px;font-size:10.6px;line-height:13px;color:#000;letter-spacing:-0.1px">Ja</div>
<div class="t" style="left:87px;top:372.84px;font-size:12px;line-height:15px;font-weight:bold;color:#000;letter-spacing:-0.2px">Trigger</div>
<div class="a" style="left:86px;top:386px;width:1139px;height:156px;background:#fff;border:1px solid #c8c8c8;box-sizing:border-box"></div>
<div class="t" style="left:100px;top:393.33px;font-size:10.6px;line-height:13px;color:#000;letter-spacing:-0.1px">1. Täglich</div>
<div class="t" style="left:326px;top:413.33px;font-size:10.6px;line-height:13px;color:#000;letter-spacing:-0.1px">Aufgabe alle 5 Minuten für die Dauer von 1</div>
<div class="t" style="left:326px;top:425.33px;font-size:10.6px;line-height:13px;color:#000;letter-spacing:-0.1px">Tag wiederholen</div>
<div class="t" style="left:326px;top:445.33px;font-size:10.6px;line-height:13px;color:#000;letter-spacing:-0.1px">Alle ausgeführten Aufgaben am Ende der</div>
<div class="t" style="left:326px;top:457.33px;font-size:10.6px;line-height:13px;color:#000;letter-spacing:-0.1px">Wiederholungsdauer beenden</div>
<div class="t" style="left:553px;top:445.33px;font-size:10.6px;line-height:13px;color:#000;letter-spacing:-0.1px">Nein</div>
<div class="t" style="left:326px;top:476.83px;font-size:10.6px;line-height:13px;color:#000;letter-spacing:-0.1px">Aktivieren</div>
<div class="t" style="left:553px;top:476.83px;font-size:10.6px;line-height:13px;color:#000;letter-spacing:-0.1px">29.04.2020 18:34:48</div>
<div class="t" style="left:780px;top:476.83px;font-size:10.6px;line-height:13px;color:#000;letter-spacing:-0.1px">Zeitzonenübergreifende Synch.</div>
<div class="t" style="left:1007px;top:476.83px;font-size:10.6px;line-height:13px;color:#000;letter-spacing:-0.1px">Nein</div>
<div class="t" style="left:326px;top:496.83px;font-size:10.6px;line-height:13px;color:#000;letter-spacing:-0.1px">Aktiviert</div>
<div class="t" style="left:553px;top:496.83px;font-size:10.6px;line-height:13px;color:#000;letter-spacing:-0.1px">Ja</div>
<div class="t" style="left:326px;top:524.83px;font-size:10.6px;line-height:13px;color:#000;letter-spacing:-0.1px">Jede/Alle 1 Tage</div>
<div class="t" style="left:87px;top:551.84px;font-size:12px;line-height:15px;font-weight:bold;color:#000;letter-spacing:-0.2px">Aktionen</div>
<div class="a" style="left:86px;top:565px;width:1139px;height:88px;background:#fff;border:1px solid #c8c8c8;box-sizing:border-box"></div>
<div class="t" style="left:100px;top:571.33px;font-size:10.6px;line-height:13px;color:#000;letter-spacing:-0.1px">1. Programm starten</div>
<div class="t" style="left:326px;top:591.33px;font-size:10.6px;line-height:13px;color:#000;letter-spacing:-0.1px">Programm/Skript</div>
<div class="t" style="left:553px;top:591.33px;font-size:10.6px;line-height:13px;color:#000;letter-spacing:-0.1px">powershell.exe</div>
<div class="t" style="left:326px;top:611.33px;font-size:10.6px;line-height:13px;color:#000;letter-spacing:-0.1px">Argumente</div>
<div class="t" style="left:553px;top:611.33px;font-size:10.6px;line-height:13px;color:#000;letter-spacing:-0.1px">-NoProfile -ExecutionPolicy bypass -File</div>
<div class="t" style="left:553px;top:623.33px;font-size:10.6px;line-height:13px;color:#000;letter-spacing:0.26px">\\dwp.local\NETLOGON\Skripte\AutoCert</div>
<div class="t" style="left:553px;top:635.33px;font-size:10.6px;line-height:13px;color:#000;letter-spacing:-0.1px">RDP.ps1</div>
<div class="t" style="left:87px;top:662.84px;font-size:12px;line-height:15px;font-weight:bold;color:#000;letter-spacing:-0.2px">Einstellungen</div>
<div class="a" style="left:86px;top:676px;width:1139px;height:189px;background:#fff;border:1px solid #c8c8c8;box-sizing:border-box"></div>
<div class="t" style="left:326px;top:682.33px;font-size:10.6px;line-height:13px;color:#000;letter-spacing:-0.1px">Beenden, wenn der Computer nicht mehr im</div>
<div class="t" style="left:326px;top:694.33px;font-size:10.6px;line-height:13px;color:#000;letter-spacing:-0.1px">Leerlauf ist.</div>
<div class="t" style="left:553px;top:682.33px;font-size:10.6px;line-height:13px;color:#000;letter-spacing:-0.1px">Nein</div>
<div class="t" style="left:326px;top:714.33px;font-size:10.6px;line-height:13px;color:#000;letter-spacing:-0.1px">Neustart beim Fortsetzen des Leerlaufs</div>
<div class="t" style="left:553px;top:714.33px;font-size:10.6px;line-height:13px;color:#000;letter-spacing:-0.1px">Nein</div>
<div class="t" style="left:326px;top:734.33px;font-size:10.6px;line-height:13px;color:#000;letter-spacing:-0.1px">Aufgabe nur im Netzbetrieb starten</div>
<div class="t" style="left:553px;top:734.33px;font-size:10.6px;line-height:13px;color:#000;letter-spacing:-0.1px">Nein</div>
</div>
<div class="a" style="left:1px;top:1px;width:1px;height:927px;background:#a0a0a0"></div>
</body></html>
